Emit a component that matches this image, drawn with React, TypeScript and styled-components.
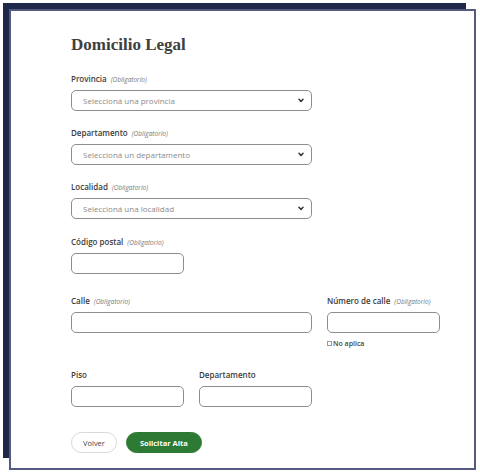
import React from 'react'
import styled, { createGlobalStyle } from 'styled-components'

const GlobalStyle = createGlobalStyle`
  html, body {
    margin: 0;
    padding: 0;
    background: #ffffff;
  }
  body {
    width: 480px;
    height: 472px;
    overflow: hidden;
    padding: 3px 0 0 3px;
    box-sizing: border-box;
    font-family: 'Open Sans', 'Liberation Sans', sans-serif;
  }
`

// dark panel behind the card, card hangs over its right and bottom edges
const Backdrop = styled.div`
  width: 457px;
  height: 449px;
  padding: 6px 0 0 6px;
  background: #1f2848;
`

const Card = styled.div`
  box-sizing: border-box;
  width: 467px;
  height: 461px;
  background: #ffffff;
  border: 2px solid #545a80;
  padding: 24px 0 0 60px;
`

const Title = styled.h1`
  margin: 0;
  font-family: 'Liberation Serif', 'Times New Roman', serif;
  font-weight: 700;
  font-size: 17px;
  line-height: 20px;
  color: #404040;
`

const Row = styled.div<{ $mt: number }>`
  display: grid;
  grid-template-columns: repeat(3, 113px);
  column-gap: 15px;
  margin-top: ${(p) => p.$mt}px;
`

const Field = styled.div<{ $span?: number }>`
  display: flex;
  flex-direction: column;
  grid-column: span ${(p) => p.$span || 1};
`

const Label = styled.label`
  display: block;
  height: 10px;
  line-height: 10px;
  margin-bottom: 6px;
  font-size: 8px;
  font-weight: 600;
  color: #3c3c3c;
  white-space: nowrap;
`

const Hint = styled.span`
  margin-left: 4px;
  font-size: 6.5px;
  font-weight: 400;
  font-style: italic;
  color: #7a7a7a;
`

const SelectBox = styled.div`
  box-sizing: border-box;
  height: 21px;
  display: flex;
  align-items: center;
  justify-content: space-between;
  padding: 0 7px 0 11px;
  border: 1px solid #8e8e8e;
  border-radius: 5px;
  font-size: 8px;
  color: #8a8a8a;
`

const TextInput = styled.div`
  box-sizing: border-box;
  height: 21px;
  border: 1px solid #8e8e8e;
  border-radius: 5px;
`

const CheckRow = styled.div`
  display: flex;
  align-items: center;
  margin-top: 6px;
  font-size: 7px;
  font-weight: 600;
  color: #444;
`

const CheckBox = styled.span`
  box-sizing: border-box;
  width: 5px;
  height: 5px;
  border: 1px solid #9a9a9a;
  margin-right: 1px;
`

const Actions = styled.div`
  display: flex;
  gap: 9px;
  margin-top: 25px;
`

const Button = styled.button<{ $primary?: boolean }>`
  box-sizing: border-box;
  height: 21px;
  padding: 0 ${(p) => (p.$primary ? 13 : 11)}px;
  border-radius: 11px;
  border: 1px solid ${(p) => (p.$primary ? '#2c7a33' : '#d8d8d8')};
  background: ${(p) => (p.$primary ? '#2c7a33' : '#ffffff')};
  color: ${(p) => (p.$primary ? '#ffffff' : '#444444')};
  font-family: 'Open Sans', sans-serif;
  font-size: 7.5px;
  font-weight: ${(p) => (p.$primary ? 700 : 500)};
`

const Chevron = () => (
  <svg width="6" height="5" viewBox="0 0 6 5">
    <path d="M1 1.2 L3 3.4 L5 1.2" fill="none" stroke="#333" strokeWidth="1.5" strokeLinecap="round" strokeLinejoin="round" />
  </svg>
)

function SelectField({ label, placeholder, mt }: { label: string; placeholder: string; mt: number }) {
  return (
    <Row $mt={mt}>
      <Field $span={2}>
        <Label>
          {label}
          <Hint>(Obligatorio)</Hint>
        </Label>
        <SelectBox>
          {placeholder}
          <Chevron />
        </SelectBox>
      </Field>
    </Row>
  )
}

export default function App() {
  return (
    <>
      <GlobalStyle />
      <Backdrop>
        <Card>
          <Title>Domicilio Legal</Title>
          <SelectField label="Provincia" placeholder="Seleccioná una provincia" mt={19} />
          <SelectField label="Departamento" placeholder="Seleccioná un departamento" mt={17} />
          <SelectField label="Localidad" placeholder="Seleccioná una localidad" mt={17} />
          <Row $mt={18}>
            <Field>
              <Label>
                Código postal<Hint>(Obligatorio)</Hint>
              </Label>
              <TextInput />
            </Field>
          </Row>
          <Row $mt={22}>
            <Field $span={2}>
              <Label>
                Calle<Hint>(Obligatorio)</Hint>
              </Label>
              <TextInput />
            </Field>
            <Field>
              <Label>
                Número de calle<Hint>(Obligatorio)</Hint>
              </Label>
              <TextInput />
              <CheckRow>
                <CheckBox />
                No aplica
              </CheckRow>
            </Field>
          </Row>
          <Row $mt={22}>
            <Field>
              <Label>Piso</Label>
              <TextInput />
            </Field>
            <Field>
              <Label>Departamento</Label>
              <TextInput />
            </Field>
          </Row>
          <Actions>
            <Button>Volver</Button>
            <Button $primary>Solicitar Alta</Button>
          </Actions>
        </Card>
      </Backdrop>
    </>
  )
}
